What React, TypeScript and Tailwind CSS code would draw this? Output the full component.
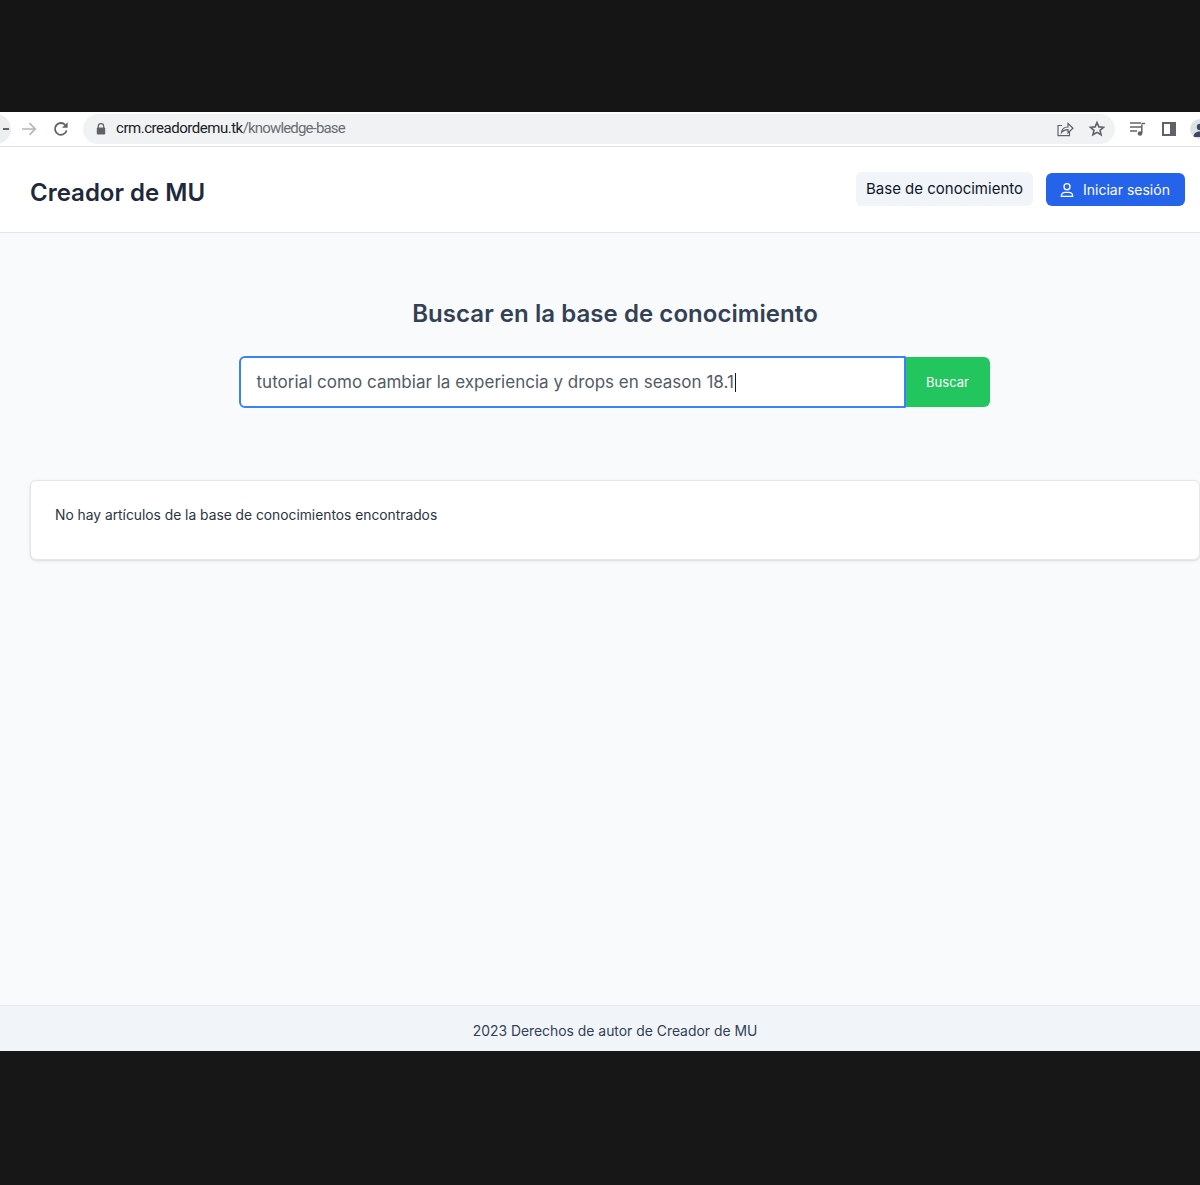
import React from "react";

function ChromeBar() {
  return (
    <div className="flex h-[35px] items-center overflow-hidden border-b border-[#dfe1e5] bg-white">
      <div className="-ml-[21px] flex h-[30px] w-[32px] shrink-0 items-center justify-end rounded-full bg-[#eceef0] pr-[2px]">
        <div className="h-[2px] w-[6px] bg-[#5f6368]" />
      </div>
      <svg width="18" height="18" viewBox="0 0 18 18" fill="none" stroke="#b4b7ba" strokeWidth="1.7" className="ml-[9px] shrink-0">
        <path d="M2 9h13M9.5 3.2 15.2 9l-5.7 5.8" />
      </svg>
      <svg width="18" height="18" viewBox="0 0 18 18" fill="none" className="ml-[14px] shrink-0">
        <path d="M14.6 10.4A5.9 5.9 0 1 1 13.3 5" stroke="#5f6368" strokeWidth="1.8" />
        <path d="M15.6 2.2v5.6H10z" fill="#5f6368" />
      </svg>
      <div className="ml-[13px] flex h-[30px] w-[1032px] shrink-0 items-center rounded-full bg-[#f0f2f4] pl-[13px] pr-[9px]">
        <svg width="10" height="12" viewBox="0 0 10 12" className="-mt-[1px] shrink-0">
          <path d="M2.3 5V3.4a2.7 2.7 0 0 1 5.4 0V5" fill="none" stroke="#5f6368" strokeWidth="1.2" />
          <rect x="0.8" y="4.6" width="8.4" height="7" rx="1" fill="#5f6368" />
        </svg>
        <div className="-mt-[2px] ml-[10px] font-['Roboto',sans-serif] text-[15px] tracking-[-0.47px] text-[#202124]">
          crm.creadordemu.tk<span className="tracking-[-0.85px] text-[#6b6e72]">/knowledge-base</span>
        </div>
        <div className="-mt-[1px] ml-auto flex items-center gap-[14px]">
          <svg width="18" height="18" viewBox="0 0 18 18" fill="none" stroke="#5f6368" strokeWidth="1.2">
            <path d="M6 5.5H2v10.200h11.500V12" />
            <path d="M5.500 12.500c.4-3.500 3-5.500 6.500-5.500V3.500l5 4.700-5 4.600V9.600c-2.800 0-5 .9-6.500 2.900z" />
          </svg>
          <svg width="18" height="18" viewBox="0 0 18 18" fill="none" stroke="#5f6368" strokeWidth="1.6">
            <path d="m9 2.600 1.900 4.300 4.600.4-3.500 3 1.100 4.500L9 12.400l-4.100 2.400L6 10.300l-3.500-3 4.600-.4z" />
          </svg>
        </div>
      </div>
      <svg width="18" height="18" viewBox="0 0 18 18" fill="none" className="ml-[14px] shrink-0">
        <path d="M1 3h11M1 7h11M1 11h7" stroke="#5f6368" strokeWidth="1.5" />
        <path d="M12.800 4.500V13" stroke="#5f6368" strokeWidth="1.5" />
        <path d="M12.500 3.500h3.500" stroke="#5f6368" strokeWidth="1.5" />
        <circle cx="11" cy="13.500" r="2.300" fill="#5f6368" />
      </svg>
      <div className="ml-[15px] flex h-[14px] w-[14px] shrink-0 justify-end border-2 border-[#5f6368] bg-white">
        <div className="h-full w-[4px] bg-[#5f6368]" />
      </div>
      <div className="ml-[14px] flex h-[20px] w-[20px] shrink-0 items-center justify-center overflow-hidden rounded-full bg-[#dfe1e5]">
        <svg width="16" height="16" viewBox="0 0 16 16" className="mt-[2px]">
          <circle cx="8" cy="5" r="3.200" fill="#3c4a66" />
          <path d="M1.500 15c0-4 3-5.500 6.500-5.500s6.500 1.500 6.500 5.500z" fill="#3c4a66" />
        </svg>
      </div>
    </div>
  );
}

export default function App() {
  return (
    <div className="flex h-[1185px] w-[1200px] flex-col overflow-hidden bg-[#171717] font-['Inter',sans-serif]">
      <div className="h-[112px] shrink-0 bg-[#151515]" />
      <ChromeBar />
      <header className="flex h-[86px] shrink-0 items-center justify-between border-b border-[#e2e8f0] bg-white pl-[30px] pr-[15px]">
        <div className="mt-[7px] text-[24px] font-semibold leading-8 text-[#1e293b]">Creador de MU</div>
        <nav className="flex items-center gap-[13px]">
          <a className="-mt-[1px] flex h-[34px] w-[177px] items-center justify-center rounded-md bg-[#f1f5f9] text-[15px] text-[#0f172a]">
            Base de conocimiento
          </a>
          <a className="flex h-[33px] w-[139px] items-center justify-center gap-[8px] rounded-md bg-[#2563eb] pr-[2px] text-[14px] text-white">
            <svg width="16" height="16" viewBox="0 0 24 24" fill="none" stroke="currentColor" strokeWidth="2">
              <circle cx="12" cy="7" r="4.500" />
              <path d="M3.500 21.500c0-4 2.500-6 6-6h5c3.500 0 6 2 6 6z" />
            </svg>
            Iniciar sesión
          </a>
        </nav>
      </header>
      <main className="flex h-[772px] shrink-0 flex-col bg-[#f8fafc] pl-[30px]">
        <h1 className="mt-[65px] text-center text-[24px] font-semibold leading-8 tracking-[0.06px] text-[#334155]">
          Buscar en la base de conocimiento
        </h1>
        <div className="mt-[26px] flex justify-center">
          <div className="mr-[2px] flex h-[52px] w-[751px] items-stretch">
            <div className="flex w-[667px] items-center rounded-l-md rounded-r-[1px] border-2 border-[#3b82f6] bg-white pl-[16px] pt-[1px] text-[17px] tracking-[0.02px] text-[#525a66]">
              tutorial como cambiar la experiencia y drops en season 18.1
              <span className="ml-[1px] h-[19px] w-[1px] bg-[#111827]" />
            </div>
            <button className="my-[1px] flex-1 rounded-r-md bg-[#22c55e] pt-[1px] text-[13px] text-white">Buscar</button>
          </div>
        </div>
        <div className="mt-[72px] flex h-[80px] rounded-md border border-[#e5e7eb] bg-white pl-[24px] pt-[24px] shadow-sm">
          <p className="text-[13.8px] leading-5 text-[#2b3442]">No hay artículos de la base de conocimientos encontrados</p>
        </div>
      </main>
      <footer className="flex h-[46px] shrink-0 items-center justify-center border-t border-[#e2e8f0] bg-[#f1f5f9] pl-[30px] pt-[6px] text-[13.9px] text-[#334155]">
        2023 Derechos de autor de Creador de MU
      </footer>
      <div className="flex-1 bg-[#171717]" />
    </div>
  );
}
